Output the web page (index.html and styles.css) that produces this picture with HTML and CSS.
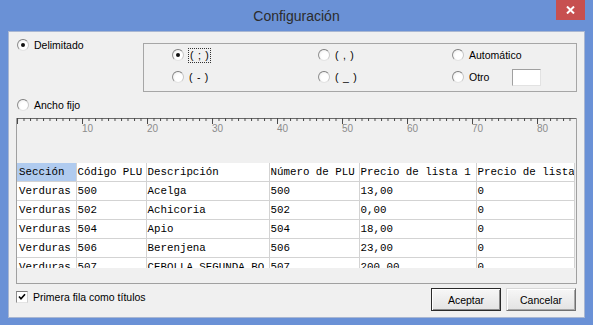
FILE: index.html
```html
<!DOCTYPE html>
<html>
<head>
  <title>Configuración</title>
  <link rel="stylesheet" href="styles.css">
</head>
<body>
  <div class="window">
    <!-- Title bar -->
    <div class="titlebar">
      <span></span>
      <span class="title">Configuración</span>
      <span class="close">
        <svg width="9" height="8" viewBox="0 0 9 8"><path d="M1 0.5 L8 7.5 M8 0.5 L1 7.5" stroke="#fff" stroke-width="2"/></svg>
      </span>
    </div>

    <div class="content">
      <div class="top">
        <label class="opt main"><span class="radio on"></span>Delimitado</label>
        <div class="groupbox">
          <label class="opt"><span class="radio on"></span><span class="focus sym">( ; )</span></label>
          <label class="opt"><span class="radio"></span><span class="sym">( , )</span></label>
          <label class="opt"><span class="radio"></span>Automático</label>
          <label class="opt"><span class="radio"></span><span class="sym">( - )</span></label>
          <label class="opt"><span class="radio"></span><span class="sym">( _ )</span></label>
          <label class="opt"><span class="radio"></span>Otro<span class="textbox"></span></label>
        </div>
      </div>

      <label class="opt fixed"><span class="radio"></span>Ancho fijo</label>

      <div class="preview">
        <svg class="ruler" width="559" height="45" viewBox="0 0 559 45">
          <defs>
            <pattern id="tick" width="6.5" height="4" patternUnits="userSpaceOnUse">
              <rect x="0" y="0" width="1" height="3" fill="#4a4a4a"/>
            </pattern>
            <pattern id="major" width="65" height="8" patternUnits="userSpaceOnUse">
              <rect x="0" y="0" width="1" height="6" fill="#4a4a4a"/>
            </pattern>
          </defs>
          <rect x="0" y="0" width="559" height="1" fill="#6a6a6a"/>
          <rect x="0" y="0" width="559" height="4" fill="url(#tick)"/>
          <rect x="0" y="0" width="559" height="7" fill="url(#major)"/>
          <g class="ruler-num">
            <text x="65" y="14">10</text>
            <text x="130" y="14">20</text>
            <text x="195" y="14">30</text>
            <text x="260" y="14">40</text>
            <text x="325" y="14">50</text>
            <text x="390" y="14">60</text>
            <text x="455" y="14">70</text>
            <text x="520" y="14">80</text>
          </g>
        </svg>

        <div class="sheet">
          <table>
            <colgroup>
              <col style="width:59px"><col style="width:70px"><col style="width:123px">
              <col style="width:90px"><col style="width:117px"><col style="width:98px">
            </colgroup>
            <tr>
              <th class="sel">Sección</th><th>Código PLU</th><th>Descripción</th>
              <th>Número de PLU</th><th>Precio de lista 1</th><th>Precio de lista</th>
            </tr>
            <tr><td>Verduras</td><td>500</td><td>Acelga</td><td>500</td><td>13,00</td><td>0</td></tr>
            <tr><td>Verduras</td><td>502</td><td>Achicoria</td><td>502</td><td>0,00</td><td>0</td></tr>
            <tr><td>Verduras</td><td>504</td><td>Apio</td><td>504</td><td>18,00</td><td>0</td></tr>
            <tr><td>Verduras</td><td>506</td><td>Berenjena</td><td>506</td><td>23,00</td><td>0</td></tr>
            <tr><td>Verduras</td><td>507</td><td>CEBOLLA SEGUNDA BO</td><td>507</td><td>200,00</td><td>0</td></tr>
          </table>
        </div>
      </div>

      <div class="bottom">
        <label class="opt check-row">
          <span class="check">
            <svg width="8" height="8" viewBox="0 0 8 8"><path d="M1 3.5 L3 5.8 L7 1.2" fill="none" stroke="#000" stroke-width="1.6"/></svg>
          </span>Primera fila como títulos
        </label>
        <div class="buttons">
          <button class="btn default">Aceptar</button>
          <button class="btn">Cancelar</button>
        </div>
      </div>
    </div>
  </div>
</body>
</html>
```

FILE: styles.css
```css
/* Base */
body {
  margin: 0;
  width: 593px;
  height: 325px;
  overflow: hidden;
  background: #6a91d6;
  font-family: "Liberation Sans", Arial, sans-serif;
  font-size: 10.5px;
  color: #000;
}

.window {
  display: flex;
  flex-direction: column;
  height: 325px;
}

/* Title bar */
.titlebar {
  height: 31px;
  display: grid;
  grid-template-columns: 1fr auto 1fr;
  align-items: start;
}

.title {
  font-size: 14px;
  line-height: 32px;
  color: #2c2c2c;
}

.close {
  justify-self: end;
  width: 29px;
  height: 20px;
  margin-right: 8px;
  background: #c75050;
  display: flex;
  align-items: center;
  justify-content: center;
}

.close svg {
  display: block;
}

/* Dialog body */
.content {
  flex: 1;
  margin: 0 8px 7px 8px;
  padding: 0 7px;
  background: #f0f0f0;
  border: 1px solid #a9b7d2;
  display: flex;
  flex-direction: column;
}

.opt {
  display: flex;
  align-items: center;
  gap: 5px;
  height: 14px;
  line-height: 14px;
  white-space: nowrap;
}

.radio {
  flex: none;
  position: relative;
  width: 12px;
  height: 12px;
  box-sizing: border-box;
  border-radius: 50%;
  border: 1px solid;
  border-color: #7d7d7d #c8c8c8 #e4e4e4 #8e8e8e;
  background: radial-gradient(circle at 60% 60%, #ffffff 40%, #e6e6e6 100%);
}

.radio.on::after {
  content: "";
  position: absolute;
  left: 3px;
  top: 3px;
  width: 4px;
  height: 4px;
  border-radius: 50%;
  background: #111;
}

.sym {
  word-spacing: 1.5px;
}

.focus {
  outline: 1px dotted #333;
  outline-offset: 0;
  line-height: 13px;
  padding: 0 1px;
}

/* Top section */
.top {
  display: flex;
  align-items: flex-start;
  padding-top: 6px;
}

.main {
  flex: none;
  width: 126px;
  margin-left: 1px;
}

.groupbox {
  flex: 1;
  margin-top: 5px;
  height: 49px;
  box-sizing: border-box;
  border: 1px solid #a6a6a6;
  padding: 1px 0 0 28px;
  display: grid;
  grid-template-columns: 146px 134px 1fr;
  grid-template-rows: 20px 20px;
  row-gap: 2px;
}

.groupbox .opt {
  height: 20px;
}

.textbox {
  width: 29px;
  height: 17px;
  box-sizing: border-box;
  margin-left: 18px;
  background: #fff;
  border: 1px solid;
  border-color: #a0a0a0 #e2e2e2 #e2e2e2 #a0a0a0;
}

.fixed {
  margin-top: 6px;
  margin-left: 1px;
}

/* Preview panel */
.preview {
  margin-top: 6px;
  height: 166px;
  box-sizing: border-box;
  border: 1px solid #a0a0a0;
  border-top: none;
  display: flex;
  flex-direction: column;
}

.ruler {
  display: block;
  flex: none;
}

.ruler-num text {
  font-family: "Liberation Sans", Arial, sans-serif;
  font-size: 10px;
  fill: #8c8c8c;
}

.sheet {
  height: 105px;
  overflow: hidden;
}

.sheet table {
  border-collapse: collapse;
  table-layout: fixed;
  width: 557px;
  font-family: "Liberation Mono", "Courier New", monospace;
  font-size: 10.8px;
}

.sheet th,
.sheet td {
  height: 18px;
  padding: 0 0 0 1px;
  border: 1px solid #d3d3d3;
  background: #fff;
  text-align: left;
  font-weight: normal;
  white-space: nowrap;
  overflow: hidden;
}

.sheet th {
  border-top: none;
  height: 18px;
}

.sheet th:first-child,
.sheet td:first-child {
  border-left: none;
  padding-left: 2px;
}

.sheet th.sel {
  background: #b0cbef;
}

/* Bottom bar */
.bottom {
  display: flex;
  align-items: center;
  justify-content: space-between;
  margin-top: 4px;
  height: 23px;
}

.check-row {
  align-self: flex-start;
  margin-top: 2px;
}

.check {
  flex: none;
  width: 12px;
  height: 12px;
  box-sizing: border-box;
  border: 1px solid;
  border-color: #7d7d7d #d0d0d0 #e4e4e4 #8e8e8e;
  background: #fff;
  display: flex;
  align-items: center;
  justify-content: center;
}

.buttons {
  display: flex;
  gap: 5px;
  margin-right: 1px;
}

.btn {
  width: 70px;
  height: 23px;
  padding: 0;
  font: inherit;
  color: #000;
  background: linear-gradient(#f7f7f7, #e3e3e3);
  border: 1px solid;
  border-color: #d8d8d8 #707070 #707070 #d8d8d8;
  box-shadow: inset 1px 1px #fff, inset -1px -1px #a8a8a8;
}

.btn.default {
  border-color: #2a2a2a;
  box-shadow: inset 1px 1px #fff, inset -1px -1px #8a8a8a;
}
```
